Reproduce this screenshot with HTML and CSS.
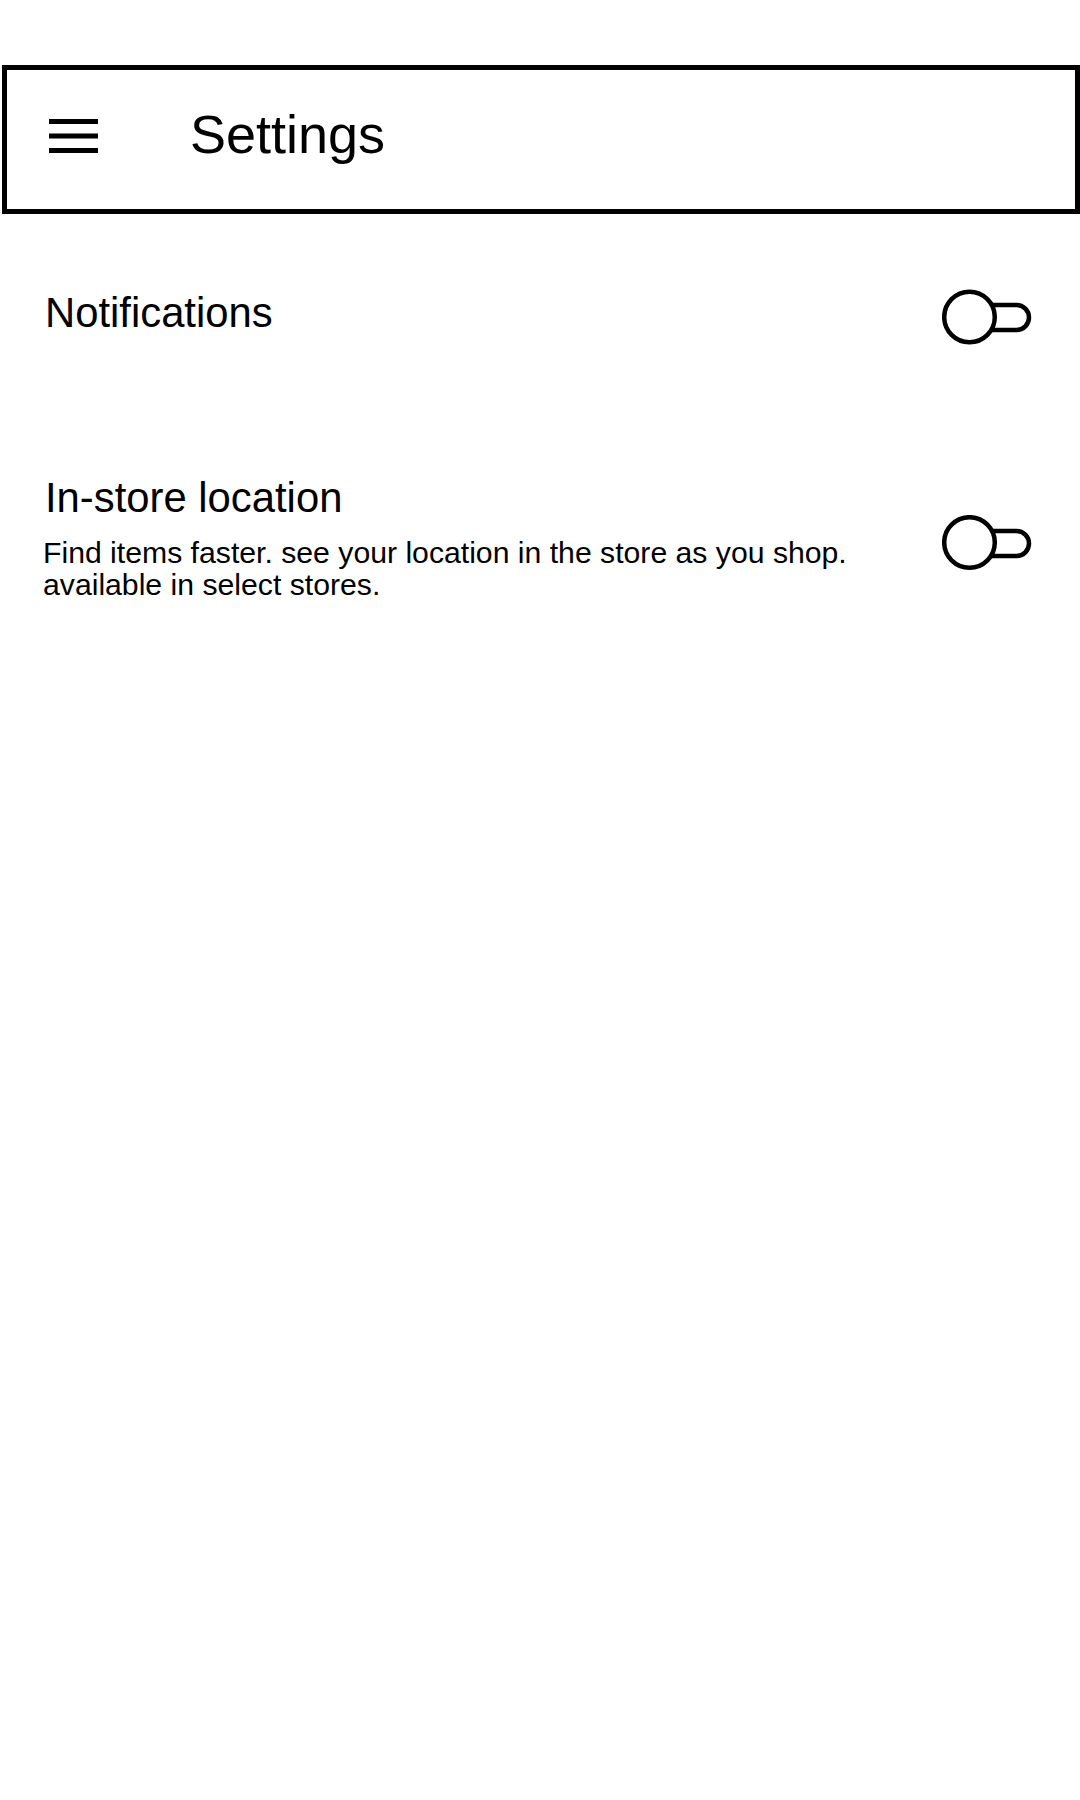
FILE: index.html
```html
<!DOCTYPE html>
<html lang="en">
<head>
<meta charset="utf-8">
<title>Settings</title>
<link rel="stylesheet" href="styles.css">
</head>
<body>
<header class="app-bar">
  <svg class="menu-icon" width="49" height="34" viewBox="0 0 49 34" aria-hidden="true">
    <rect x="0" y="0" width="49" height="5" fill="#000"/>
    <rect x="0" y="14.5" width="49" height="5" fill="#000"/>
    <rect x="0" y="29" width="49" height="5" fill="#000"/>
  </svg>
  <h1 class="app-title">Settings</h1>
</header>

<main class="settings-list">
  <section class="setting-row">
    <div class="setting-text">
      <h2 class="setting-title">Notifications</h2>
    </div>
    <svg class="toggle" width="90" height="56" viewBox="0 0 90 56" aria-hidden="true">
      <path d="M50 16 H74.5 A12.5 12.5 0 0 1 74.5 41 H50" fill="none" stroke="#000" stroke-width="4.5"/>
      <circle cx="27.5" cy="28" r="25.3" fill="#fff" stroke="#000" stroke-width="4.5"/>
    </svg>
  </section>

  <section class="setting-row">
    <div class="setting-text">
      <h2 class="setting-title">In-store location</h2>
      <p class="setting-desc">Find items faster. see your location in the store as you shop. available in select stores.</p>
    </div>
    <svg class="toggle toggle-lower" width="90" height="56" viewBox="0 0 90 56" aria-hidden="true">
      <path d="M50 16 H74.5 A12.5 12.5 0 0 1 74.5 41 H50" fill="none" stroke="#000" stroke-width="4.5"/>
      <circle cx="27.5" cy="27.5" r="25.3" fill="#fff" stroke="#000" stroke-width="4.5"/>
    </svg>
  </section>
</main>
</body>
</html>
```

FILE: styles.css
```css
* {
  box-sizing: border-box;
}

html, body {
  margin: 0;
  padding: 0;
  background: #fff;
}

body {
  font-family: "Liberation Sans", Arial, sans-serif;
  color: #000;
  width: 1080px;
  min-height: 1800px;
}

.app-bar {
  margin: 65px 0 0 2px;
  width: 1078px;
  height: 149px;
  border: 5px solid #000;
  display: flex;
  align-items: center;
  padding: 0 0 7px 42px;
}

.menu-icon {
  flex: none;
  display: block;
}

.app-title {
  margin: 0 0 5px 92px;
  font-size: 54px;
  line-height: 54px;
  font-weight: normal;
}

.settings-list {
  display: flex;
  flex-direction: column;
  gap: 129px;
  padding: 75px 48px 0 43px;
}

.setting-row {
  display: flex;
  align-items: flex-start;
}

.setting-text {
  flex: 1;
  min-width: 0;
}

.setting-title {
  margin: 0 0 0 2px;
  font-size: 41.8px;
  line-height: 48px;
  font-weight: normal;
}

.setting-desc {
  margin: 15px 0 0 0;
  font-size: 30.2px;
  line-height: 32px;
}

.toggle {
  flex: none;
  display: block;
}

.toggle-lower {
  margin-top: 41px;
}
```
